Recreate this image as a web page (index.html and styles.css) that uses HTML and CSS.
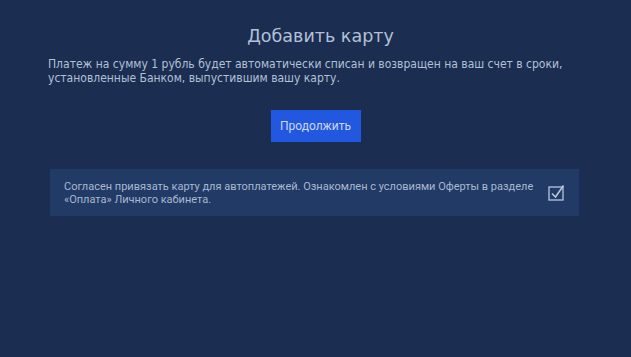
FILE: index.html
```html
<!DOCTYPE html>
<html lang="ru">
<head>
    <meta charset="UTF-8">
    <title>Добавить карту</title>
    <link rel="stylesheet" href="styles.css">
</head>
<body>
    <div class="page">
        <h1 class="title">Добавить карту</h1>
        <p class="info">Платеж на сумму 1 рубль будет автоматически списан и возвращен на ваш счет в сроки, установленные Банком, выпустившим вашу карту.</p>
        <div class="actions">
            <button class="btn-continue">Продолжить</button>
        </div>
        <div class="agree">
            <div class="agree-text">Согласен привязать карту для автоплатежей. Ознакомлен с условиями Оферты в разделе «Оплата» Личного кабинета.</div>
            <svg class="check" width="17" height="17" viewBox="0 0 17 17">
                <rect x="1" y="3" width="14" height="13" fill="none" stroke="#b9c6dc" stroke-width="1.3"/>
                <path d="M4 9.5 L7.5 13 L15.5 1.5" fill="none" stroke="#b9c6dc" stroke-width="1.6"/>
            </svg>
        </div>
    </div>
</body>
</html>
```

FILE: styles.css
```css
html, body {
    margin: 0;
    padding: 0;
    height: 100%;
    background-color: #1b2d50;
}

.page {
    padding: 24px 48px 0 48px;
}

.title {
    margin: 0;
    padding-left: 10px;
    text-align: center;
    font-family: "DejaVu Sans", sans-serif;
    font-weight: normal;
    font-size: 17.5px;
    line-height: 24px;
    color: #b3c1d8;
}

.info {
    margin: 9px 0 0 0;
    font-family: "DejaVu Sans", sans-serif;
    font-stretch: condensed;
    font-size: 12px;
    line-height: 14px;
    color: #b3c1d8;
}

.actions {
    display: flex;
    justify-content: center;
    margin-top: 25px;
}

.btn-continue {
    width: 90px;
    height: 32px;
    border: none;
    background-color: #2257df;
    color: #cdd8f0;
    font-family: Roboto, sans-serif;
    font-size: 12px;
    padding: 0;
}

.agree {
    display: flex;
    align-items: center;
    margin: 27px 4px 0 2px;
    height: 47px;
    padding: 0 14px;
    background-color: #213a66;
}

.agree-text {
    flex: 1;
    padding-top: 1px;
    font-family: Roboto, sans-serif;
    font-size: 11px;
    line-height: 13px;
    color: #aab8d0;
}

.check {
    margin-left: 12px;
    margin-right: 0;
}
```
